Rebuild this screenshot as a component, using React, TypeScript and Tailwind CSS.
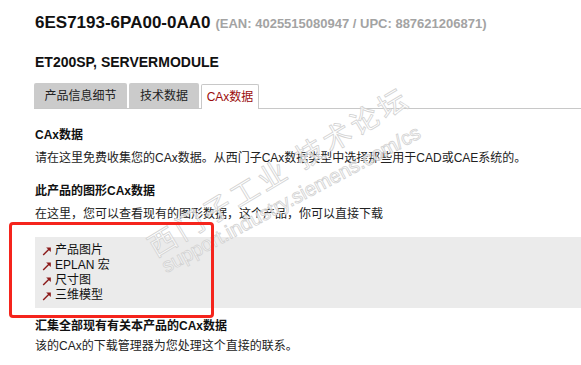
const links = ["产品图片", "EPLAN 宏", "尺寸图", "三维模型"]

const LinkArrow = () => (
  <svg viewBox="0 0 10 10" className="h-[10px] w-[10px] shrink-0">
    <path d="M1.2 9 L7.4 2.8" stroke="#8b1a1a" strokeWidth="1.4" fill="none" />
    <path d="M4.2 1.4 L8.8 1.4 L8.8 6 Z" fill="#8b1a1a" />
  </svg>
)

const App = () => {
  return (
    <div className="relative h-[365px] w-[581px] overflow-hidden bg-white font-['Liberation_Sans','Noto_Sans_CJK_SC',sans-serif] text-[#222]">
      <div className="pl-[35px] pt-[13px]">
        {/* Header */}
        <h1 className="flex items-baseline gap-[5px] leading-[20px]">
          <span className="text-[17px] font-bold text-[#111]">6ES7193-6PA00-0AA0</span>
          <span className="text-[13px] font-bold text-[#a3a3a3]">(EAN: 4025515080947 / UPC: 887621206871)</span>
        </h1>
        <h2 className="mt-[20px] text-[14px] font-bold leading-[16px] text-[#111]">ET200SP, SERVERMODULE</h2>

        {/* Tabs */}
        <div className="-ml-px mt-[13px] flex h-[26px] items-end gap-[2px] border-b border-[#c8c8c8] text-[12px]">
          <div className="flex h-[25px] w-[93px] items-center justify-center rounded-t-[2px] bg-[#cbcbcb]">产品信息细节</div>
          <div className="flex h-[25px] w-[70px] items-center justify-center rounded-t-[2px] bg-[#cbcbcb]">技术数据</div>
          <div className="-mb-px flex h-[25px] w-[58px] items-center justify-center rounded-t-[2px] border border-b-0 border-[#c8c8c8] bg-white text-[#9b0d0d]">CAx数据</div>
        </div>

        {/* Content */}
        <div className="text-[12px] leading-[18px]">
          <h3 className="mt-[17px] h-[18px] font-bold text-[#111]">CAx数据</h3>
          <p className="mt-[5px] h-[18px]">请在这里免费收集您的CAx数据。从西门子CAx数据类型中选择那些用于CAD或CAE系统的。</p>

          <h3 className="mt-[15px] h-[18px] font-bold text-[#111]">此产品的图形CAx数据</h3>
          <p className="mt-[5px] h-[18px]">在这里，您可以查看现有的图形数据，这个产品，你可以直接下载</p>

          <ul className="mt-[14px] bg-[#ebebeb] pb-[5px] pl-[7px] pt-[6px] text-[#111]">
            {links.map((l) => (
              <li key={l} className="flex h-[15px] items-center gap-[3px] leading-[15px]">
                <LinkArrow />
                <span>{l}</span>
              </li>
            ))}
          </ul>

          <h3 className="mt-[9px] h-[18px] font-bold text-[#111]">汇集全部现有有关本产品的CAx数据</h3>
          <p className="mt-[2px] h-[18px]">该的CAx的下载管理器为您处理这个直接的联系。</p>
          <p className="mt-[8px] h-[18px]">如何使用CAx数据下载管理器</p>
        </div>
      </div>

      {/* Watermark */}
      <div className="pointer-events-none absolute left-[151px] top-[236px] origin-[0_50%] -rotate-[31deg] whitespace-nowrap text-[28px] leading-[28px] tracking-[4px] text-white/70 [-webkit-text-stroke:0.8px_#d2d2d2]">
        西门子工业 技术论坛
      </div>
      <div className="pointer-events-none absolute left-[163px] top-[257px] origin-[0_50%] -rotate-[28deg] whitespace-nowrap font-['Liberation_Sans',sans-serif] text-[20px] leading-[20px] text-white/70 [-webkit-text-stroke:0.8px_#d2d2d2]">
        support.industry.siemens.com/cs
      </div>

      {/* Annotation */}
      <div className="pointer-events-none absolute left-[9px] top-[222px] h-[96px] w-[205px] rounded-[4px] border-[3px] border-[#f5241c]" />
    </div>
  )
}

export default App
